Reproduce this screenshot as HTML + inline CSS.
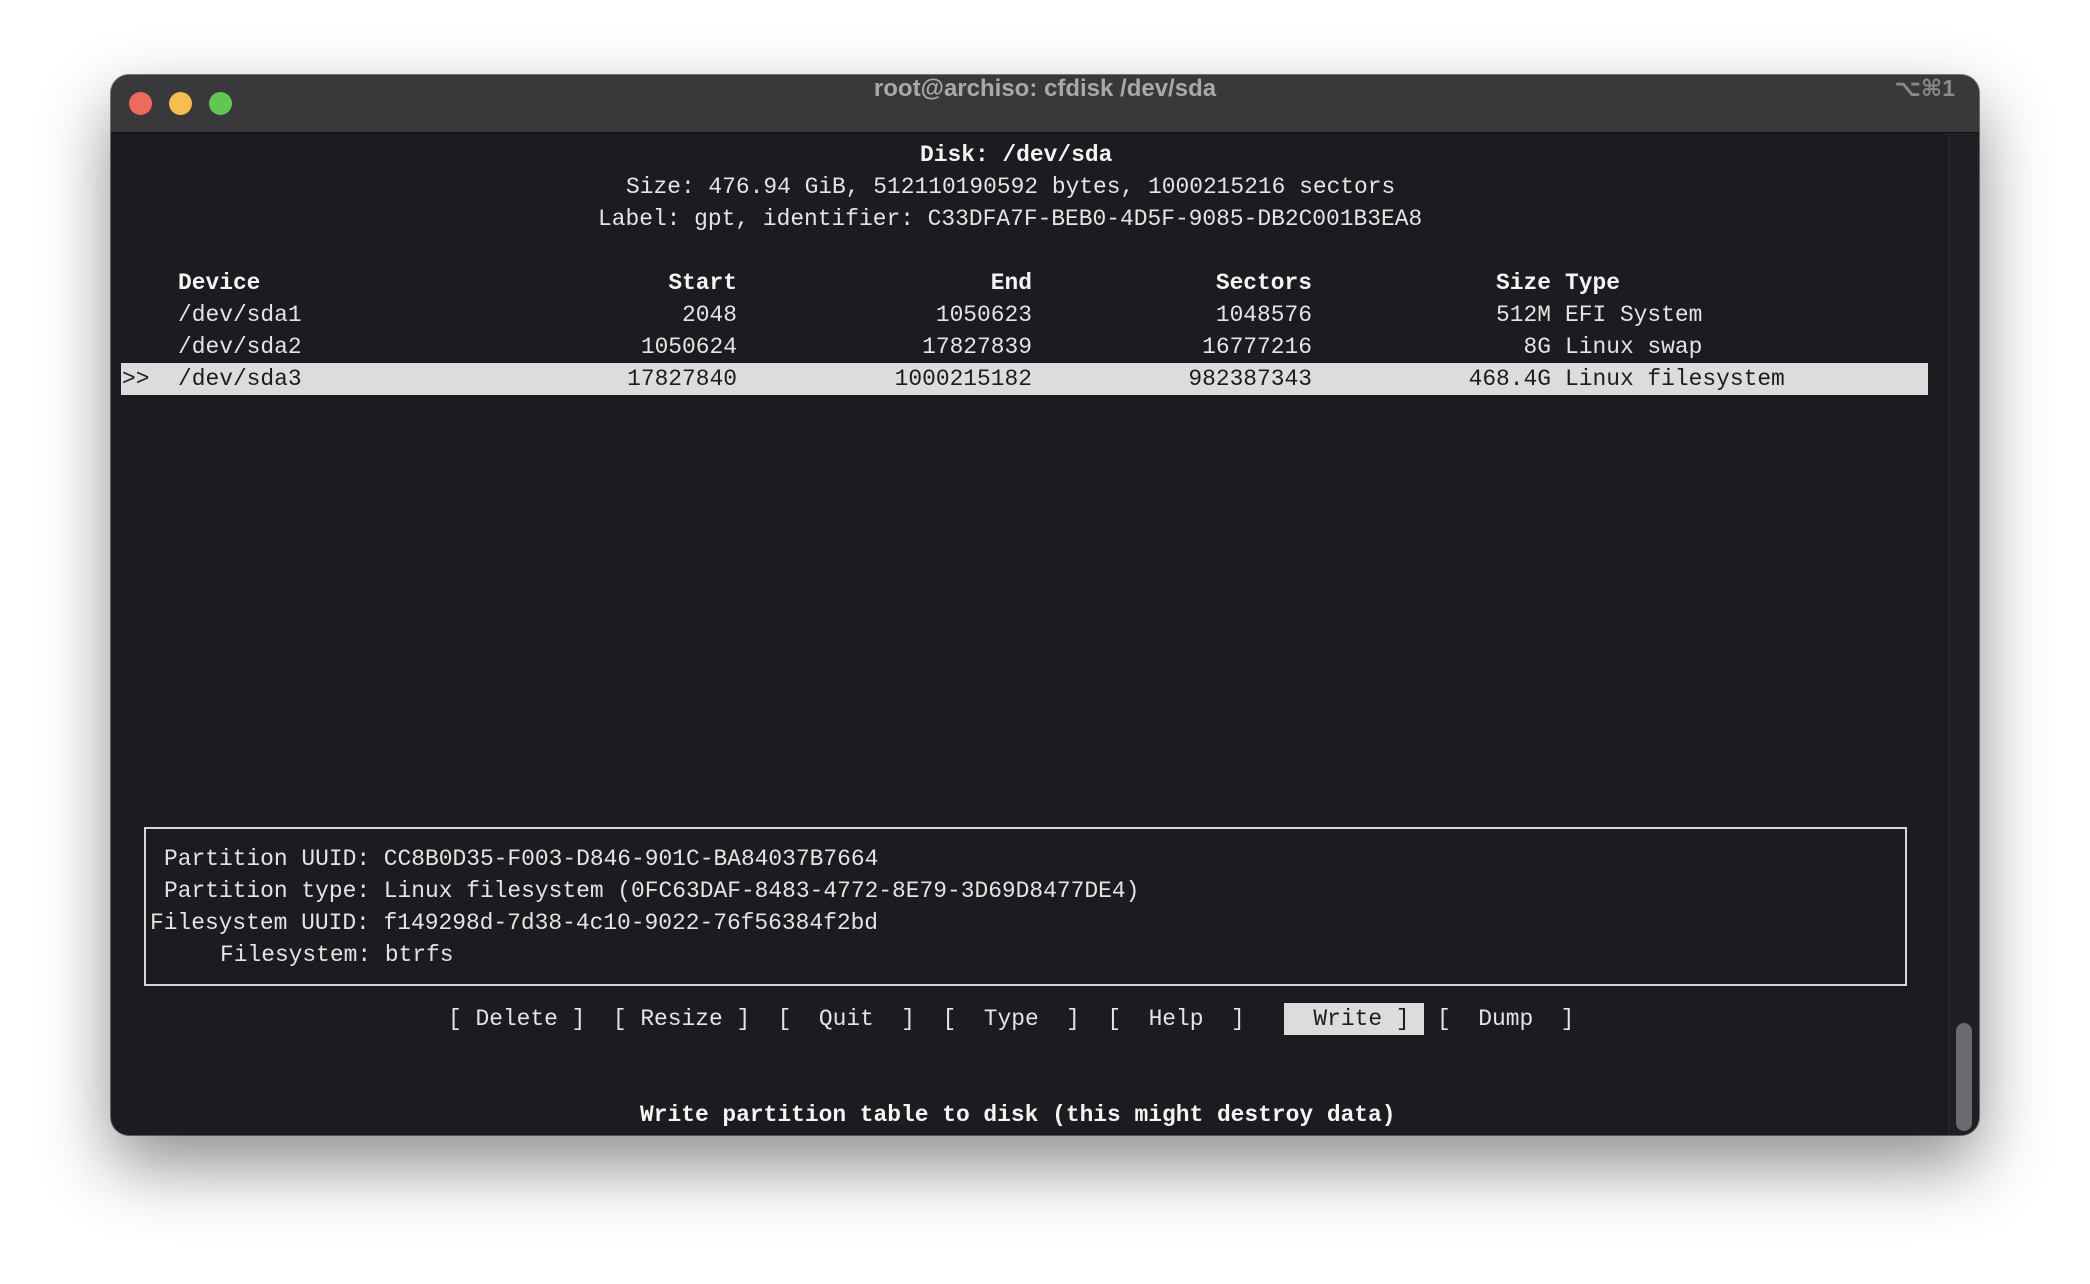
<!DOCTYPE html>
<html><head><meta charset="utf-8"><style>
html,body{margin:0;padding:0;width:2090px;height:1284px;background:#fff;overflow:hidden}
.win{position:absolute;left:111px;top:75px;width:1868px;height:1060px;border-radius:18px;background:#1a1c20;overflow:hidden;box-shadow:0 30px 70px rgba(0,0,0,.45),0 0 0 1px rgba(0,0,0,.5)}
.tb{position:absolute;left:0;top:0;width:100%;height:57px;background:#39393b;border-bottom:1px solid #111}
.dot{position:absolute;top:17px;width:23px;height:23px;border-radius:50%}
.title{position:absolute;left:0;width:100%;top:0;line-height:57px;text-align:center;font:bold 24px "Liberation Sans",sans-serif;color:#a9a9ab}
.kb{position:absolute;right:24px;top:0;line-height:57px;font:bold 23px "Liberation Sans","DejaVu Sans",sans-serif;color:#8a8a8c}
.t{position:absolute;font:22.9px "Liberation Mono",monospace;color:#e4e4e4;white-space:pre;line-height:32px;height:32px}
.b{font-weight:bold;color:#f4f4f4}
.r{text-align:right}
</style></head><body>
<div class="win">
 <div class="tb">
  <div class="dot" style="left:18px;background:#ee6a5f"></div>
  <div class="dot" style="left:58px;background:#f5be4f"></div>
  <div class="dot" style="left:98px;background:#62c655"></div>
  <div class="title">root@archiso: cfdisk /dev/sda</div>
  <div class="kb">⌥⌘1</div>
 </div>
 <div style="position:absolute;left:1837px;top:58px;width:31px;height:1002px;background:#1e2024;border-left:1px solid #2a2c30"></div>
 <div style="position:absolute;left:1845px;top:948px;width:16px;height:108px;border-radius:8px;background:#6a6b70"></div>
 <div style="position:absolute;left:10px;top:288px;width:1807px;height:32px;background:#dcdcdc"></div>
 <div style="position:absolute;left:33px;top:752px;width:1763px;height:159px;border:2px solid #d8d8d8;box-sizing:border-box"></div>
 <div style="position:absolute;left:1173px;top:928px;width:140px;height:32px;background:#dcdcdc"></div>
</div>
<div class="t b" style="left:920px;top:139px">Disk: /dev/sda</div>
<div class="t" style="left:626px;top:171px">Size: 476.94 GiB, 512110190592 bytes, 1000215216 sectors</div>
<div class="t" style="left:598px;top:203px">Label: gpt, identifier: C33DFA7F-BEB0-4D5F-9085-DB2C001B3EA8</div>

<div class="t b" style="left:178px;top:267px">Device</div>
<div class="t b r" style="left:537px;width:200px;top:267px">Start</div>
<div class="t b r" style="left:832px;width:200px;top:267px">End</div>
<div class="t b r" style="left:1112px;width:200px;top:267px">Sectors</div>
<div class="t b r" style="left:1351px;width:200px;top:267px">Size</div>
<div class="t b" style="left:1565px;top:267px">Type</div>

<div class="t" style="left:178px;top:299px">/dev/sda1</div>
<div class="t r" style="left:537px;width:200px;top:299px">2048</div>
<div class="t r" style="left:832px;width:200px;top:299px">1050623</div>
<div class="t r" style="left:1112px;width:200px;top:299px">1048576</div>
<div class="t r" style="left:1351px;width:200px;top:299px">512M</div>
<div class="t" style="left:1565px;top:299px">EFI System</div>

<div class="t" style="left:178px;top:331px">/dev/sda2</div>
<div class="t r" style="left:537px;width:200px;top:331px">1050624</div>
<div class="t r" style="left:832px;width:200px;top:331px">17827839</div>
<div class="t r" style="left:1112px;width:200px;top:331px">16777216</div>
<div class="t r" style="left:1351px;width:200px;top:331px">8G</div>
<div class="t" style="left:1565px;top:331px">Linux swap</div>

<div class="t" style="left:122px;top:363px;color:#1a1c20">&gt;&gt;</div>
<div class="t" style="left:178px;top:363px;color:#1a1c20">/dev/sda3</div>
<div class="t r" style="left:537px;width:200px;top:363px;color:#1a1c20">17827840</div>
<div class="t r" style="left:832px;width:200px;top:363px;color:#1a1c20">1000215182</div>
<div class="t r" style="left:1112px;width:200px;top:363px;color:#1a1c20">982387343</div>
<div class="t r" style="left:1351px;width:200px;top:363px;color:#1a1c20">468.4G</div>
<div class="t" style="left:1565px;top:363px;color:#1a1c20">Linux filesystem</div>

<div class="t" style="left:164px;top:843px">Partition UUID: CC8B0D35-F003-D846-901C-BA84037B7664</div>
<div class="t" style="left:164px;top:875px">Partition type: Linux filesystem (0FC63DAF-8483-4772-8E79-3D69D8477DE4)</div>
<div class="t" style="left:150px;top:907px">Filesystem UUID: f149298d-7d38-4c10-9022-76f56384f2bd</div>
<div class="t" style="left:220px;top:939px">Filesystem: btrfs</div>

<div class="t" style="left:448px;top:1003px">[ Delete ]  [ Resize ]  [  Quit  ]  [  Type  ]  [  Help  ]  <span style="color:#1a1c20">[  Write ]</span>  [  Dump  ]</div>
<div class="t b" style="left:640px;top:1099px">Write partition table to disk (this might destroy data)</div>
</body></html>
